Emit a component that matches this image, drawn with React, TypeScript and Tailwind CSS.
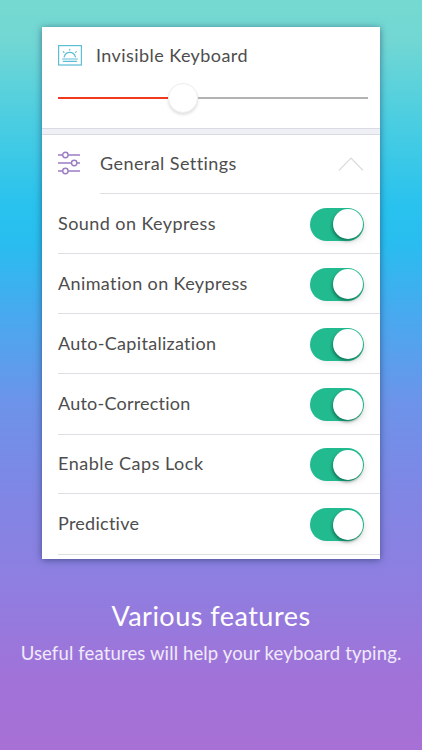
import React from "react"

const settings = [
  { label: "Sound on Keypress", row: "h-[60px]", text: "tracking-[0.43px]" },
  { label: "Animation on Keypress", row: "h-[60px]", text: "tracking-[0.38px]" },
  { label: "Auto-Capitalization", row: "h-[60px]", text: "tracking-[0.3px]" },
  { label: "Auto-Correction", row: "h-[61px]", text: "tracking-[0.22px]" },
  { label: "Enable Caps Lock", row: "h-[59px]", text: "tracking-[0.5px]" },
  { label: "Predictive", row: "h-[61px]", text: "tracking-[0.26px]" },
]

const KeyboardIcon: React.FC = () => (
  <svg width="24" height="21" viewBox="0 0 24 21" fill="none" stroke="#5dbdd5" strokeLinecap="round">
    <rect x="0.6" y="0.6" width="22.8" height="19.4" strokeWidth="1.2" />
    <path d="M6.2 11.9C7 8.9 9.2 7.3 11.8 7.3s4.8 1.6 5.6 4.6" strokeWidth="1.3" />
    <path d="M4.6 14h14.8M5.2 16.3h13.4" strokeWidth="1.2" />
    <path d="M11.8 4.3v.8M5.3 6.6l.7.7M18.3 6.6l-.7.7" strokeWidth="1.2" />
  </svg>
)

const SlidersIcon: React.FC = () => (
  <svg width="22" height="24" viewBox="0 0 22 24" fill="none" stroke="#9b7cc3" strokeWidth="1.4">
    <path d="M0 4h4.7M10.1 4H22M0 12h13.5M19 12h3M0 20h4.7M10.1 20H22" />
    <circle cx="7.4" cy="4" r="2.7" />
    <circle cx="16.2" cy="12" r="2.7" />
    <circle cx="7.4" cy="20" r="2.7" />
  </svg>
)

const Toggle: React.FC = () => (
  <button
    role="switch"
    aria-checked="true"
    className="mt-px flex h-[33px] w-[54px] shrink-0 items-center justify-end rounded-full bg-[#22bb8f] pr-[1.5px] shadow-[3px_3px_5px_rgba(0,0,0,0.06)]"
  >
    <span className="size-[30px] rounded-full bg-white shadow-[-1px_2px_3px_rgba(0,60,40,0.5)]" />
  </button>
)

const App: React.FC = () => {
  return (
    <div className="flex h-[750px] w-[422px] flex-col items-center overflow-hidden bg-[linear-gradient(180deg,#76d9d1_0px,#72d7d3_40px,#49cde2_125px,#29c2ee_205px,#28beef_240px,#48a9ef_315px,#6d93e9_405px,#8185e4_500px,#8f7ee0_585px,#a172d8_680px,#a770d5_750px)] pt-[27px] font-['Lato',sans-serif]">
      <div className="h-[532px] w-[338px] overflow-hidden bg-white text-[18px] leading-[24px] text-[#4d4d4d] shadow-[0_1px_7px_rgba(20,40,80,0.55)]">
        <section className="h-[101px] pt-[16px] pr-3 pl-4">
          <div className="flex h-6 items-center gap-[14px]">
            <KeyboardIcon />
            <span className="tracking-[0.43px]">Invisible Keyboard</span>
          </div>
          <div className="mt-[15.5px] flex h-[30px] items-center">
            <div className="h-[2px] w-[110px] bg-[#f0391f]" />
            <div className="size-[30px] shrink-0 rounded-full border border-[#eeeeee] bg-white shadow-[0_2px_3px_rgba(0,0,0,0.12)]" />
            <div className="h-[2px] flex-1 bg-[#b3b3b3]" />
          </div>
        </section>

        <div className="h-[7px] border-y border-[#dadae3] bg-[#efeff6]" />

        <section>
          <div className="flex h-[59px] pl-4">
            <div className="flex w-[42px] items-center pb-[3px]">
              <SlidersIcon />
            </div>
            <div className="flex flex-1 items-center justify-between border-b border-[#dfdfe3] pr-4 pb-px">
              <span className="pb-[2px] tracking-[0.43px]">General Settings</span>
              <svg width="26" height="14" viewBox="0 0 26 14" fill="none" stroke="#d9d9d9" strokeWidth="1.2">
                <path d="M1 13.3 13 1.2 25 13.3" />
              </svg>
            </div>
          </div>

          {settings.map((item) => (
            <div key={item.label} className={`${item.row} pl-4`}>
              <div className="flex h-full items-center justify-between border-b border-[#dfdfe3] pr-4">
                <span className={`${item.text} pb-[2px]`}>{item.label}</span>
                <Toggle />
              </div>
            </div>
          ))}
        </section>
      </div>

      <div className="mt-[39px] flex flex-col items-center whitespace-nowrap text-white">
        <h1 className="text-[27px] leading-[36px] tracking-[0.48px]">Various features</h1>
        <p className="mt-[7px] text-[18.5px] leading-[24px] tracking-[0.13px] text-white/85">
          Useful features will help your keyboard typing.
        </p>
      </div>
    </div>
  )
}

export default App
